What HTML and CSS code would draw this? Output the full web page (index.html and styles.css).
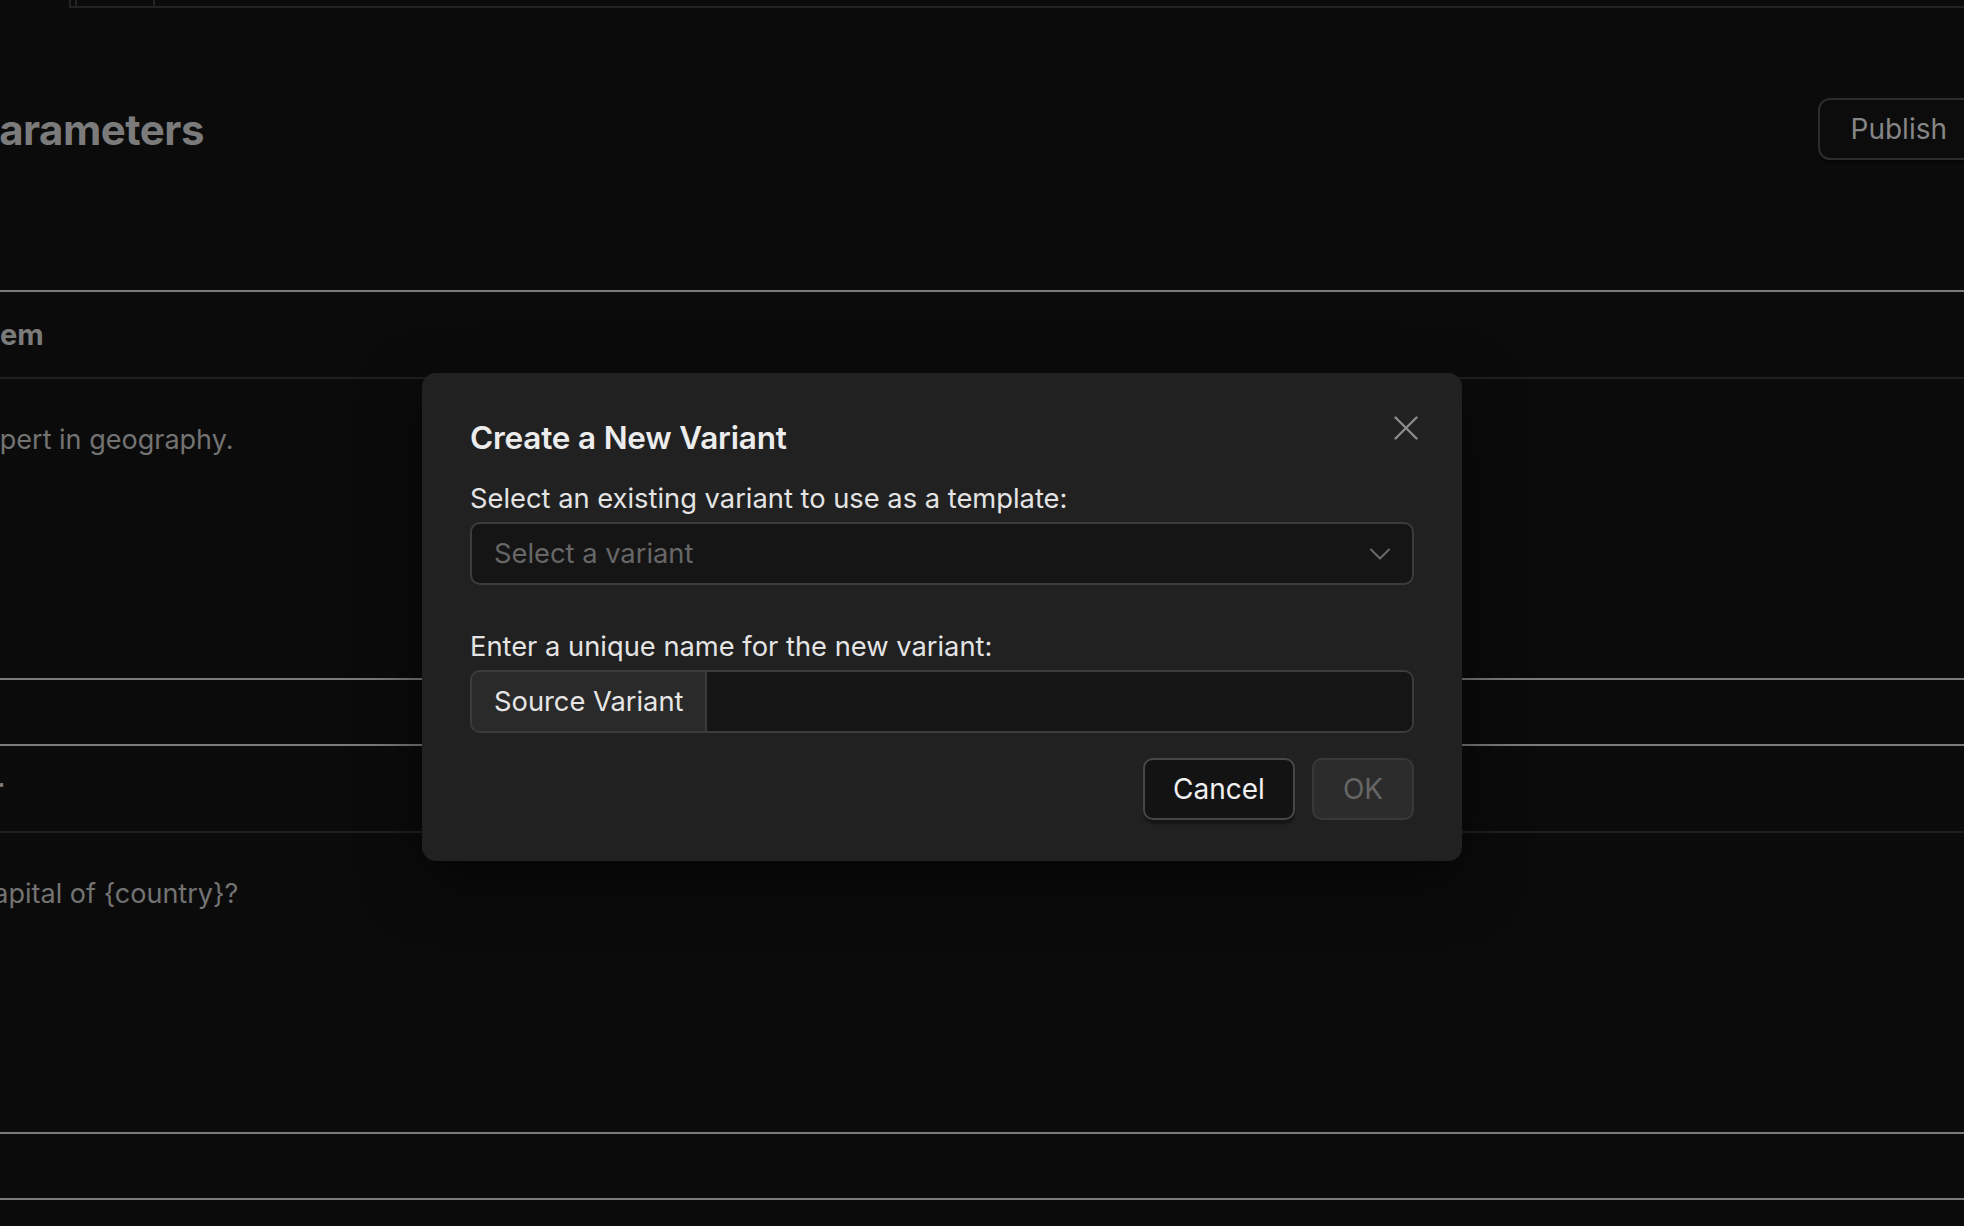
FILE: index.html
```html
<!DOCTYPE html>
<html lang="en">
<head>
<meta charset="utf-8">
<title>Create a New Variant</title>
<link rel="stylesheet" href="styles.css">
</head>
<body>
<div class="tabstrip"><div class="tab tab-a"></div><div class="tab tab-b"></div></div>
<div class="main">
  <div class="page-head">
    <h1 class="page-title">Parameters</h1>
    <button class="publish">Publish</button>
  </div>
  <section class="block">
    <div class="block-head"><span class="head-text">System</span></div>
    <div class="block-body"><p class="body-text">You are an expert in geography.</p></div>
  </section>
  <div class="spacer"></div>
  <section class="block">
    <div class="block-head"><span class="head-text">User</span></div>
    <div class="block-body"><p class="body-text">What is the capital of {country}?</p></div>
  </section>
  <div class="spacer"></div>
  <section class="block"></section>
</div>

<div class="modal" role="dialog">
  <button class="close" aria-label="Close">
    <svg viewBox="0 0 24 24" width="24" height="24"><path d="M1.5 1.5 L22.5 22.5 M22.5 1.5 L1.5 22.5" stroke="#8a8a8a" stroke-width="2.4" stroke-linecap="round" fill="none"/></svg>
  </button>
  <h2 class="modal-title">Create a New Variant</h2>
  <p class="label label-first">Select an existing variant to use as a template:</p>
  <div class="select">
    <span class="placeholder">Select a variant</span>
    <svg class="chevron" viewBox="0 0 20 12" width="20" height="12"><path d="M1 1.5 L10 10.5 L19 1.5" stroke="#6a6a6a" stroke-width="2" fill="none" stroke-linecap="round" stroke-linejoin="round"/></svg>
  </div>
  <p class="label label-second">Enter a unique name for the new variant:</p>
  <div class="input-group">
    <span class="addon">Source Variant</span>
    <span class="input"></span>
  </div>
  <div class="actions">
    <button class="btn btn-cancel">Cancel</button>
    <button class="btn btn-ok">OK</button>
  </div>
</div>
</body>
</html>
```
FILE: styles.css
```css
* { box-sizing: border-box; margin: 0; padding: 0; }
html, body { background: #0b0b0b; }
body {
  width: 1964px;
  height: 1226px;
  overflow: hidden;
  position: relative;
  font-family: Inter, "Noto Sans", sans-serif;
}
button { font-family: inherit; cursor: pointer; }

.tabstrip {
  margin-left: 69px;
  height: 8px;
  border-left: 2px solid #232323;
  border-bottom: 2px solid #232323;
  display: flex;
}
.tab { border-right: 2px solid #232323; }
.tab-a { width: 6px; }
.tab-b { width: 78px; }

.main {
  margin-left: -190px;
  width: 2170px;
}
.page-head {
  height: 282px;
  padding-top: 91px;
  display: flex;
  justify-content: space-between;
  align-items: flex-start;
}
.page-title {
  padding-left: 163px;
  font-size: 42px;
  line-height: 62px;
  font-weight: 700;
  color: #7b7b7b;
  letter-spacing: -0.5px;
}
.publish {
  height: 62px;
  margin-top: -1px;
  padding: 0 31px;
  border: 2px solid #2d2d2d;
  border-radius: 12px;
  background: #0c0c0c;
  color: #868686;
  font-size: 28px;
  box-shadow: 0 3px 2px rgba(0,0,0,.4);
}

.block { border-top: 2px solid #7a7a7a; }
.block-head {
  height: 87px;
  border-bottom: 2px solid #202020;
  display: flex;
  align-items: center;
}
.head-text {
  padding-left: 127px;
  font-size: 29px;
  font-weight: 700;
  color: #7b7b7b;
}
.block-body {
  height: 299px;
  padding-top: 41px;
}
.body-text {
  padding-left: 17px;
  font-size: 27px;
  line-height: 40px;
  color: #737373;
}
.spacer {
  height: 66px;
  border-top: 2px solid #7a7a7a;
}

.modal {
  position: absolute;
  left: 422px;
  top: 373px;
  width: 1040px;
  height: 488px;
  background: #212121;
  border-radius: 14px;
  padding: 41px 48px 0;
  box-shadow: 0 20px 60px rgba(0,0,0,.55);
}
.close {
  position: absolute;
  right: 44px;
  top: 43px;
  width: 24px;
  height: 24px;
  background: none;
  border: 0;
  display: flex;
}
.modal-title {
  font-size: 31.5px;
  line-height: 48px;
  font-weight: 600;
  color: #ececec;
  letter-spacing: -0.2px;
}
.label {
  font-size: 27.3px;
  line-height: 36px;
  color: #e4e4e4;
}
.label-first { margin-top: 19px; }
.label-second { margin-top: 44px; }
.select {
  margin-top: 5px;
  height: 63px;
  border: 2px solid #3c3c3c;
  border-radius: 10px;
  background: #151515;
  display: flex;
  align-items: center;
  justify-content: space-between;
  padding: 0 22px;
}
.placeholder {
  font-size: 27.3px;
  color: #676767;
}
.input-group {
  margin-top: 5px;
  height: 63px;
  display: flex;
  border: 2px solid #3c3c3c;
  border-radius: 10px;
  overflow: hidden;
}
.addon {
  width: 235px;
  background: #2a2a2a;
  border-right: 2px solid #3c3c3c;
  padding-left: 22px;
  display: flex;
  align-items: center;
  font-size: 27.3px;
  color: #e6e6e6;
}
.input {
  flex: 1;
  background: #151515;
}
.actions {
  margin-top: 25px;
  display: flex;
  justify-content: flex-end;
  gap: 17px;
}
.btn {
  height: 62px;
  border-radius: 10px;
  font-size: 28px;
  border: 2px solid;
}
.btn-cancel {
  width: 152px;
  background: #131313;
  border-color: #474747;
  color: #f0f0f0;
  box-shadow: 0 4px 2px rgba(0,0,0,.35);
}
.btn-ok {
  width: 102px;
  background: #2c2c2c;
  border-color: #393939;
  color: #666666;
}
```
